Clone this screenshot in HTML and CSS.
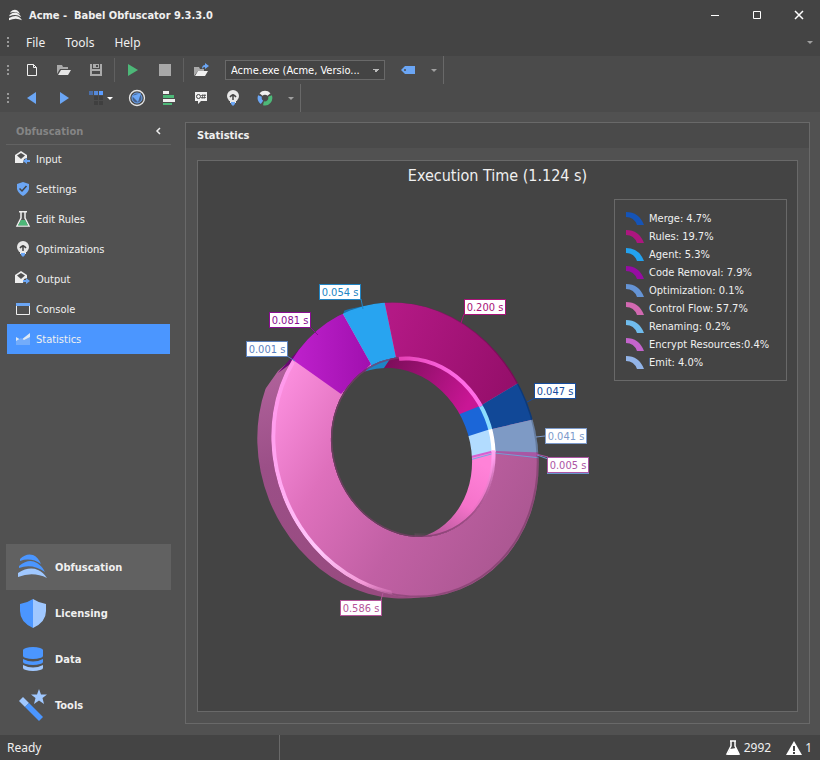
FILE: index.html
```html
<!DOCTYPE html>
<html lang="en">
<head>
    <meta charset="UTF-8">
    <meta name="viewport" content="width=device-width, initial-scale=1.0">
    <title>Acme - Babel Obfuscator 9.3.3.0</title>

    <link rel="stylesheet" href="styles.css">
</head>
<body>
<div class="window">
    <header class="titlebar">
        <svg class="logo" width="13" height="12" viewBox="0 0 30 26" fill="#f0f0f0">
            <path d="M3 6Q12-3 20 3Q24 6 25 11Q15 3 3 8Z"/>
            <path d="M1 13Q14 3 23 11Q27 14 28 18Q16 9 1 16Z"/>
            <path d="M0 20Q14 12 22 17Q27 20 30 25Q16 18 0 25Z"/>
        </svg>
        <h1>Acme -&nbsp; Babel Obfuscator 9.3.3.0</h1>
        <div class="window-controls">
            <button type="button" aria-label="Minimize"><svg width="10" height="10"><path d="M1 5.500H9" stroke="#fff"/></svg></button>
            <button type="button" aria-label="Maximize"><svg width="10" height="10"><path d="M1.500 1.500H8.500V8.500H1.500Z" stroke="#fff" fill="none"/></svg></button>
            <button type="button" aria-label="Close"><svg width="10" height="10"><path d="M1 1L9 9M9 1L1 9" stroke="#fff" stroke-width="1.500"/></svg></button>
        </div>
    </header>

    <nav class="menubar">
        <span class="grip"></span>
        <button type="button">File</button>
        <button type="button">Tools</button>
        <button type="button">Help</button>
        <span class="chevron menubar-end"></span>
    </nav>

    <div class="toolbar">
        <span class="grip"></span>
        <button type="button" aria-label="New"><svg width="16" height="16"><path d="M3.500 2.500H9.500L12.500 5.500V13.500H3.500ZM9.500 2.500V5.500H12.500" fill="none" stroke="#f0f0f0"/></svg></button>
        <button type="button" aria-label="Open"><svg width="16" height="16"><path d="M1 12V3H6L7 5H12V7H4Z" fill="#aaa"/><path d="M5 8H15L12 13H2Z" fill="#e6e6e6"/></svg></button>
        <button type="button" aria-label="Save"><svg width="16" height="16"><path d="M2 2H4V7H12V2H14V14H2ZM4 9V12H12V9Z" fill="#aaa" fill-rule="evenodd"/><path d="M5 2H11V6H5ZM8 3V5H10V3Z" fill="#aaa" fill-rule="evenodd"/></svg></button>
        <span class="separator"></span>
        <button type="button" aria-label="Run"><svg width="16" height="16"><path d="M3 2L13 8L3 14Z" fill="#4db878"/></svg></button>
        <button type="button" aria-label="Stop"><svg width="16" height="16"><path d="M2 2H14V14H2Z" fill="#a8a8a8"/></svg></button>
        <span class="separator"></span>
        <button type="button" aria-label="Open output"><svg width="16" height="16"><path d="M0 14V5H5L6 7H10V9H4Z" fill="#aaa"/><path d="M4 9H14L11 14H1Z" fill="#f0f0f0"/><path d="M8 7Q8 3 11 3V1L15 4L11 7V5Q9 5 8 7Z" fill="#6ba6f5"/></svg></button>
        <select class="assembly" aria-label="Assembly">
            <option>Acme.exe (Acme, Versio...</option>
        </select>
        <button type="button" aria-label="Tag"><svg width="16" height="16"><path d="M1 8L5 4H15V12H5Z" fill="#6ba6f5"/><circle cx="5" cy="8" r="1" fill="#4b4b4b"/></svg></button>
        <button type="button" class="toolbar-end" aria-label="Toolbar options"><span class="chevron"></span></button>
    </div>

    <div class="toolbar">
        <span class="grip"></span>
        <button type="button" aria-label="Back"><svg width="16" height="16"><path d="M12 2L3 8L12 14Z" fill="#6ba6f5"/></svg></button>
        <button type="button" aria-label="Forward"><svg width="16" height="16"><path d="M4 2L13 8L4 14Z" fill="#6ba6f5"/></svg></button>
        <button type="button" class="split" aria-label="Palette">
            <svg width="16" height="16"><path d="M0 1H4V5H0Z" fill="#4a6ea8"/><path d="M5 1H9V5H5Z" fill="#5589da"/><path d="M10 1H14V5H10Z" fill="#5c9dff"/><path d="M5 6H9V10H5ZM10 6H14V10H10ZM5 11H9V15H5ZM10 11H14V15H10Z" fill="#3f3f3f"/></svg>
            <span class="chevron light"></span>
        </button>
        <button type="button" aria-label="Radar"><svg width="18" height="18"><circle cx="9" cy="9" r="7.500" fill="none" stroke="#e6e6e6" stroke-width="1.300"/><circle cx="9" cy="9" r="5" fill="#45608a" stroke="#6ba6f5"/><path d="M4 7L13 4L10 13Z" fill="#6ba6f5"/></svg></button>
        <button type="button" aria-label="Timeline"><svg width="16" height="16"><path d="M2 1H8V4H2ZM2 9H14V12H2Z" fill="#f0f0f0"/><path d="M2 5H13V8H2ZM2 13H11V15H2Z" fill="#4db878"/></svg></button>
        <button type="button" aria-label="Comments"><svg width="16" height="16"><path d="M2 2H14V11H8L5 14V11H2Z" fill="#f0f0f0"/><circle cx="5.500" cy="6.500" r="2" fill="none" stroke="#444"/><path d="M10 4L9 9M12 4L11 9M8 5.500H13M8 7.500H13" stroke="#444" stroke-width=".7"/></svg></button>
        <button type="button" aria-label="Optimize"><svg width="16" height="16"><circle cx="8" cy="6" r="6" fill="#e8e8e8"/><path d="M5 10H11V13H5Z" fill="#e8e8e8"/><path d="M6 12H10V14L8 16L6 14Z" fill="#6ba6f5"/><path d="M8 10V4M5 7Q8 3 11 7" fill="none" stroke="#444" stroke-width="1.500"/></svg></button>
        <button type="button" aria-label="Chart"><svg width="16" height="16" fill="none" stroke-width="4"><path d="M4 4.500A5.500 5.500 0 0 1 12 4.500" stroke="#f0f0f0"/><path d="M13 6A5.500 5.500 0 0 1 6.500 13.200" stroke="#4db878"/><path d="M5 12.300A5.500 5.500 0 0 1 3 6" stroke="#6ba6f5"/></svg></button>
        <button type="button" class="toolbar-end" aria-label="Toolbar options"><span class="chevron"></span></button>
    </div>

    <div class="workspace">
        <aside class="sidebar">
            <div class="sidebar-header">
                <h2>Obfuscation</h2>
                <button type="button" aria-label="Collapse"><svg width="6" height="8"><path d="M5 1L2 4L5 7" fill="none" stroke="#eee" stroke-width="1.500"/></svg></button>
            </div>
            <nav class="nav-list">
                <a href="#input"><svg width="18" height="18"><path d="M1 5L7 1L13 5V8L10 9L9 13H1Z" fill="#eee"/><path d="M3 5.500L7 3L11 5.500L7 9Z" fill="#505050"/><path d="M16 10H13V8L9 11L13 14V12H16Z" fill="#6ba6f5"/></svg>Input</a>
                <a href="#settings"><svg width="18" height="18"><path d="M9 2L15 4V9Q14 13 9 16Q4 13 3 9V4Z" fill="#6ba6f5"/><path d="M5.500 8.500L8 11L12.500 6" fill="none" stroke="#444" stroke-width="1.500"/></svg>Settings</a>
                <a href="#rules"><svg width="18" height="18"><path d="M7 2V8L3 16H15L11 8V2M5 1.800H13" fill="none" stroke="#eee" stroke-width="1.500"/><path d="M7 10H11L14 15.500H4Z" fill="#4db878"/></svg>Edit Rules</a>
                <a href="#optimizations"><svg width="18" height="18"><circle cx="9" cy="7" r="6" fill="#e8e8e8"/><path d="M6 11H12V14H6Z" fill="#e8e8e8"/><path d="M7 13H11V15L9 17L7 15Z" fill="#6ba6f5"/><path d="M9 11V5M6 8Q9 4 12 8" fill="none" stroke="#444" stroke-width="1.500"/></svg>Optimizations</a>
                <a href="#output"><svg width="18" height="18"><path d="M1 5L7 1L13 5V8L10 9L9 13H1Z" fill="#eee"/><path d="M3 5.500L7 3L11 5.500L7 9Z" fill="#505050"/><path d="M9 10H12V8L16 11L12 14V12H9Z" fill="#6ba6f5"/></svg>Output</a>
                <a href="#console"><svg width="18" height="18"><path d="M2.500 4.500H15.500V14.500H2.500Z" fill="none" stroke="#eee"/><path d="M2 3H16V6H2Z" fill="#6ba6f5"/></svg>Console</a>
                <a href="#statistics" class="selected"><svg width="18" height="18"><path d="M2 7L7 10L16 3V8L8 12H2Z" fill="#dce8f5"/><path d="M2 11L7 8L10 10L16 7V15H2Z" fill="#73acfa"/></svg>Statistics</a>
            </nav>
            <nav class="groups">
                <a href="#obfuscation" class="active">
                    <svg width="32" height="32" viewBox="0 0 32 32"><g fill="#4b96ff"><path d="M4 8Q10 2 17 4Q22 6 25 13Q15 6 4 10Z"/><path d="M3 15Q13 7 21 12Q26 15 29 21Q16 12 3 17Z"/></g><path d="M2 22Q13 15 22 19Q27 21 31 27Q17 20 2 26Z" fill="#a0c8ff"/></svg>
                    Obfuscation
                </a>
                <a href="#licensing">
                    <svg width="32" height="32"><path d="M17 2Q11 6 4 7V14Q4 25 17 31Z" fill="#4b96ff"/><path d="M17 2Q23 6 30 7V14Q30 25 17 31Z" fill="#a0c8ff"/></svg>
                    Licensing
                </a>
                <a href="#data">
                    <svg width="32" height="32"><path d="M7 7A10 3 0 0 1 27 7V13A10 3 0 0 1 7 13ZM7 16Q17 21 27 16V19A10 3 0 0 1 7 19Z" fill="#4b96ff"/><path d="M7 22Q17 27 27 22V25A10 3 0 0 1 7 25Z" fill="#a0c8ff"/></svg>
                    Data
                </a>
                <a href="#tools">
                    <svg width="32" height="32"><path d="M3 12L7 8L13 14L9 18Z" fill="#a0c8ff"/><path d="M9 18L13 14L27 28L23 32Z" fill="#4b96ff"/><path d="M23 0L25 5.500H31L26.500 9L28 15L23 11.500L18 15L19.500 9L15 5.500H21Z" fill="#a0c8ff"/></svg>
                    Tools
                </a>
            </nav>
        </aside>

        <main class="panel">
            <h2 class="panel-title">Statistics</h2>
            <section class="chart">
                <h3>Execution Time (1.124 s)</h3>
                <div class="chart-body">
                    <svg class="plot" viewBox="198 199 408 420" role="img" aria-label="Execution time by phase">
                        <defs>
                            <linearGradient id="pinkFace" x1="270" y1="380" x2="540" y2="540" gradientUnits="userSpaceOnUse">
                                <stop offset="0" stop-color="#ff92e2"/><stop offset=".3" stop-color="#de70bc"/><stop offset=".6" stop-color="#c160a4"/><stop offset="1" stop-color="#a8568f"/>
                            </linearGradient>
                            <linearGradient id="rulesFace" x1="385" y1="330" x2="510" y2="380" gradientUnits="userSpaceOnUse">
                                <stop offset="0" stop-color="#b31985"/><stop offset="1" stop-color="#960f6b"/>
                            </linearGradient>
                            <linearGradient id="removalFace" x1="295" y1="350" x2="370" y2="350" gradientUnits="userSpaceOnUse">
                                <stop offset="0" stop-color="#bd20cb"/><stop offset="1" stop-color="#a110af"/>
                            </linearGradient>
                            <linearGradient id="pinkSide" x1="270" y1="370" x2="340" y2="590" gradientUnits="userSpaceOnUse">
                                <stop offset="0" stop-color="#b0629b"/><stop offset=".4" stop-color="#9b4f87"/><stop offset="1" stop-color="#984b80"/>
                            </linearGradient>
                            <linearGradient id="rulesWall" x1="385" y1="365" x2="465" y2="410" gradientUnits="userSpaceOnUse">
                                <stop offset="0" stop-color="#7b0d59"/><stop offset="1" stop-color="#c91695"/>
                            </linearGradient>
                            <linearGradient id="pinkWall" x1="475" y1="460" x2="430" y2="535" gradientUnits="userSpaceOnUse">
                                <stop offset="0" stop-color="#ff82d8"/><stop offset=".5" stop-color="#f573ca"/><stop offset="1" stop-color="#b55799"/>
                            </linearGradient>
                            <linearGradient id="outerGlow" x1="0" y1="360" x2="0" y2="594" gradientUnits="userSpaceOnUse">
                                <stop offset="0" stop-color="#ff9aec"/><stop offset=".3" stop-color="#ffa9f2"/><stop offset=".65" stop-color="#ffc8fb"/><stop offset=".85" stop-color="#f398d7"/><stop offset="1" stop-color="#c160a4" stop-opacity="0"/>
                            </linearGradient>
                            <linearGradient id="innerGlow" x1="400" y1="0" x2="482" y2="0" gradientUnits="userSpaceOnUse">
                                <stop offset="0" stop-color="#b31985" stop-opacity="0"/><stop offset=".4" stop-color="#e440b4"/><stop offset="1" stop-color="#ff6be6"/>
                            </linearGradient>
                            <linearGradient id="lowerGlow" x1="0" y1="455" x2="0" y2="536" gradientUnits="userSpaceOnUse">
                                <stop offset="0" stop-color="#ffd2ff"/><stop offset=".4" stop-color="#ff9eee"/><stop offset="1" stop-color="#c160a4" stop-opacity="0"/>
                            </linearGradient>
                            <mask id="ring" maskUnits="userSpaceOnUse" x="198" y="199" width="408" height="420">
                                <ellipse cx="405" cy="450" rx="131" ry="150" transform="rotate(-21.500 405 450)" fill="#fff"/>
                                <ellipse cx="413" cy="447" rx="80.500" ry="91.500" transform="rotate(-21.500 413 447)" fill="#000"/>
                            </mask>
                            <clipPath id="back"><ellipse cx="390" cy="452" rx="130" ry="149" transform="rotate(-21.500 390 452)"/></clipPath>
                            <clipPath id="inner"><ellipse cx="413" cy="447" rx="80.500" ry="91.500" transform="rotate(-21.500 413 447)"/></clipPath>
                            <clipPath id="leftEdge"><path d="M240 327L293 361L350 450L400 620H240Z"/></clipPath>
                            <clipPath id="rulesEdge"><path d="M396 340L413 447L520 383V300H396Z"/></clipPath>
                            <clipPath id="mergeEdge"><path d="M413 447L520 383L540 418Z"/></clipPath>
                            <clipPath id="emitEdge"><path d="M413 447L540 418V453L413 450Z"/></clipPath>
                            <clipPath id="lowerEdge"><path d="M413 447L560 453V560H415Z"/></clipPath>
                        </defs>

                        <!-- outer side -->
                        <g clip-path="url(#back)">
                            <path d="M240 410L266 388L278 371L285 365L293 361L420 400V620H240Z" fill="url(#pinkSide)"/>
                            <path d="M278 373L292 357L307 341L328 323L345 313V345L293 362Z" fill="#6c0875"/>
                            <path d="M343 315L350 290H388V330Z" fill="#1872ad"/>
                            <path d="M385 290H560V420H385Z" fill="#6d0a4f"/>
                        </g>

                        <!-- front face -->
                        <g mask="url(#ring)">
                            <path d="M240 280H580V620H240Z" fill="url(#pinkFace)"/>
                            <path d="M250 329.500L341 394L371 364L324 280H250Z" fill="url(#removalFace)"/>
                            <path d="M324 280L371 364L374 380L400 377L380 280Z" fill="#28a4f0"/>
                            <path d="M380 280L400 377L460 418L570 352V280Z" fill="url(#rulesFace)"/>
                            <path d="M460 418L570 352L580 409L470 434Z" fill="#114897"/>
                            <path d="M470 434L580 409V456L470 450Z" fill="#7e9ac5"/>
                            <path d="M470 451L494 451L560 453V461Z" fill="#a957a4"/>
                            <path d="M470 457L494 453L560 460" fill="none" stroke="#779dd0"/>
                            <ellipse cx="404" cy="449" rx="131" ry="150" transform="rotate(-21.500 404 449)" fill="none" stroke="#000" stroke-opacity=".2" stroke-width="2"/>
                            <g clip-path="url(#leftEdge)">
                                <ellipse cx="405" cy="450" rx="129" ry="148" transform="rotate(-21.500 405 450)" fill="none" stroke="url(#outerGlow)" stroke-width="4"/>
                            </g>
                        </g>

                        <!-- inner wall and hole -->
                        <g clip-path="url(#inner)">
                            <path d="M320 340H500V540H320Z" fill="#9a4d84"/>
                            <path d="M325 383L341 394L349 392L371 364L360 340Z" fill="#76087f"/>
                            <path d="M360 345H396L397 357L382 371L345 400L371 364Z" fill="#1e85c5"/>
                            <path d="M396 350L382 371L450 425L481 405V340H396Z" fill="url(#rulesWall)"/>
                            <path d="M450 418L500 398V427L455 441Z" fill="#1b66d8"/>
                            <path d="M455 440.500L500 426V452L455 463Z" fill="#b2dcff"/>
                            <path d="M494 452L455 462L400 545H500Z" fill="url(#pinkWall)"/>
                            <path d="M455 461L495 451" stroke="#d75fd2" stroke-width="2"/>
                            <path d="M455 464L495 453" stroke="#73a7e5"/>
                            <ellipse cx="394" cy="454" rx="76.500" ry="87.500" transform="rotate(-21.500 394 454)" fill="#444"/>
                            <ellipse cx="413" cy="447" rx="80.500" ry="91.500" transform="rotate(-21.500 413 447)" fill="none" stroke="#7a3c69" stroke-opacity=".7" stroke-width="3"/>
                        </g>
                        <g fill="none" stroke-width="4">
                            <g clip-path="url(#rulesEdge)"><ellipse cx="413" cy="447" rx="79" ry="90" transform="rotate(-21.500 413 447)" stroke="url(#innerGlow)"/></g>
                            <g clip-path="url(#mergeEdge)"><ellipse cx="413" cy="447" rx="79" ry="90" transform="rotate(-21.500 413 447)" stroke="#8bddff"/></g>
                            <g clip-path="url(#emitEdge)"><ellipse cx="413" cy="447" rx="79" ry="90" transform="rotate(-21.500 413 447)" stroke="#fff"/></g>
                            <g clip-path="url(#lowerEdge)"><ellipse cx="413" cy="447" rx="79" ry="90" transform="rotate(-21.500 413 447)" stroke="url(#lowerGlow)"/></g>
                        </g>

                        <!-- callouts -->
                        <g class="callouts">
                            <g stroke="#2285c3"><path d="M361 299L363 309"/><rect x="319.500" y="284.500" width="41" height="15"/></g>
                            <g stroke="#8a0d92"><path d="M310 327L318 335"/><rect x="269.500" y="312.500" width="41" height="15"/></g>
                            <g stroke="#5c82bf"><path d="M287 356L295 361"/><rect x="246.500" y="341.500" width="41" height="15"/></g>
                            <g stroke="#a81278"><path d="M464 314L461 323"/><rect x="464.500" y="299.500" width="41" height="15"/></g>
                            <g stroke="#164c9d"><path d="M535 398L527 402"/><rect x="534.500" y="383.500" width="41" height="15"/></g>
                            <g stroke="#7c9acb"><path d="M545 436L536 437"/><rect x="545.500" y="428.500" width="41" height="15"/></g>
                            <g stroke="#6898d0"><path d="M537 455L548 459"/><rect x="547.500" y="459.500" width="41" height="14"/></g>
                            <g stroke="#ad55a4"><path d="M536 454L548 457"/><rect x="547.500" y="457.500" width="41" height="15"/></g>
                            <g stroke="#b5569a"><path d="M381 600L383 593"/><rect x="340.500" y="600.500" width="41" height="15"/></g>
                            <text x="340" y="296" fill="#2285c3">0.054 s</text>
                            <text x="290" y="324" fill="#8a0d92">0.081 s</text>
                            <text x="267" y="353" fill="#5c82bf">0.001 s</text>
                            <text x="485" y="311" fill="#a81278">0.200 s</text>
                            <text x="555" y="395" fill="#164c9d">0.047 s</text>
                            <text x="566" y="440" fill="#7c9acb">0.041 s</text>
                            <text x="568" y="469" fill="#ad55a4">0.005 s</text>
                            <text x="361" y="612" fill="#b5569a">0.586 s</text>
                        </g>
                    </svg>
                    <ul class="legend">
                        <li><svg class="swatch merge"><path d="M0 0Q13 0 18 13H11Q8 5 0 5Z"/></svg>Merge: 4.7%</li>
                        <li><svg class="swatch rules"><path d="M0 0Q13 0 18 13H11Q8 5 0 5Z"/></svg>Rules: 19.7%</li>
                        <li><svg class="swatch agent"><path d="M0 0Q13 0 18 13H11Q8 5 0 5Z"/></svg>Agent: 5.3%</li>
                        <li><svg class="swatch removal"><path d="M0 0Q13 0 18 13H11Q8 5 0 5Z"/></svg>Code Removal: 7.9%</li>
                        <li><svg class="swatch optimization"><path d="M0 0Q13 0 18 13H11Q8 5 0 5Z"/></svg>Optimization: 0.1%</li>
                        <li><svg class="swatch flow"><path d="M0 0Q13 0 18 13H11Q8 5 0 5Z"/></svg>Control Flow: 57.7%</li>
                        <li><svg class="swatch renaming"><path d="M0 0Q13 0 18 13H11Q8 5 0 5Z"/></svg>Renaming: 0.2%</li>
                        <li><svg class="swatch encrypt"><path d="M0 0Q13 0 18 13H11Q8 5 0 5Z"/></svg>Encrypt Resources:0.4%</li>
                        <li><svg class="swatch emit"><path d="M0 0Q13 0 18 13H11Q8 5 0 5Z"/></svg>Emit: 4.0%</li>
                    </ul>
                </div>
            </section>
        </main>
    </div>

    <footer class="statusbar">
        <span class="status-text">Ready</span>
        <span class="status-item"><svg width="16" height="16"><path d="M5 1H11M6 1V6L2 14H14L10 6V1" fill="none" stroke="#fff" stroke-width="1.500"/><path d="M5 9L11 8L14 15H2Z" fill="#fff"/></svg>2992</span>
        <span class="status-item"><svg width="16" height="16"><path d="M8 1L16 15H0Z" fill="#fff"/><path d="M8 6V11M8 12V14" stroke="#444" stroke-width="2"/></svg>1</span>
    </footer>
</div>
</body>
</html>
```
FILE: styles.css
```css
* {
    box-sizing: border-box;
}

body {
    margin: 0;
    font-family: "DejaVu Sans Condensed", Tahoma, sans-serif;
    font-size: 11px;
    color: #f0f0f0;
}

h1, h2, h3, ul {
    margin: 0;
    padding: 0;
}

button {
    display: flex;
    align-items: center;
    justify-content: center;
    padding: 0;
    border: none;
    background: none;
    color: inherit;
    font: inherit;
}

a {
    color: inherit;
    text-decoration: none;
}

svg {
    display: block;
    flex: none;
}

.window {
    --dark: #444;
    --line: #696969;
    --blue: #4b96ff;
    display: flex;
    flex-direction: column;
    min-height: 100vh;
    background: #515151;
}

/* title and menu */
.titlebar {
    display: flex;
    align-items: center;
    height: 30px;
    padding-left: 9px;
    background: var(--dark);
}

.titlebar h1 {
    flex: 1;
    margin-left: 7px;
    font-size: 11px;
    font-weight: 700;
}

.window-controls {
    display: flex;
}

.window-controls button {
    width: 42px;
    height: 30px;
}

.menubar {
    display: flex;
    align-items: center;
    height: 26px;
    padding-bottom: 2px;
    background: var(--dark);
    font-family: "Noto Sans", sans-serif;
    font-size: 12px;
}

.menubar button {
    padding: 0 10px;
}

.menubar-end {
    margin: 0 7px 0 auto;
}

.grip {
    width: 16px;
    height: 12px;
    background: radial-gradient(circle, #999 1px, transparent 1px) 6px 0 / 4px 4px repeat-y;
}

.chevron {
    border: 3px solid transparent;
    border-top-color: #a0a0a0;
    border-bottom: none;
}

.chevron.light {
    border-top-color: #fff;
}

/* toolbars */
.toolbar {
    display: flex;
    align-items: center;
    height: 28px;
    background: #4b4b4b;
}

.toolbar button {
    width: 32px;
    height: 28px;
}

.toolbar .split {
    width: 41px;
    gap: 2px;
}

.toolbar .toolbar-end {
    width: 20px;
    border-right: 1px solid var(--line);
}

.separator {
    width: 1px;
    height: 24px;
    margin: 0 2px;
    background: #606060;
}

.assembly {
    appearance: none;
    width: 160px;
    height: 20px;
    margin: 0 7px;
    padding: 0 20px 0 5px;
    border: 1px solid var(--line);
    border-radius: 0;
    background: conic-gradient(from -45deg at 50% 100%, #bbb 90deg, transparent 0) 147px 8px / 6px 3px no-repeat, var(--dark);
    background: conic-gradient(from -45deg at 50% 100%, transparent 0) no-repeat, var(--dark);
    background: linear-gradient(to top right, transparent 50%, #bbb 50%) 147px 8px / 3px 3px no-repeat,
        linear-gradient(to top left, transparent 50%, #bbb 50%) 150px 8px / 3px 3px no-repeat,
        var(--dark);
    color: #fff;
    font: inherit;
}

.workspace {
    display: flex;
    flex: 1;
}

/* sidebar */
.sidebar {
    display: flex;
    flex-direction: column;
    width: 185px;
    padding: 6px 14px 7px 6px;
}

.sidebar-header {
    display: flex;
    align-items: center;
    justify-content: space-between;
    height: 27px;
    margin-bottom: -1px;
    padding: 0 10px;
    border-bottom: 1px solid #626262;
    color: #858585;
}

.sidebar-header h2 {
    font-size: 11px;
    font-weight: 700;
}

.nav-list a {
    display: flex;
    align-items: center;
    gap: 4px;
    height: 30px;
    margin: 0 1px;
    padding-left: 7px;
}

.nav-list .selected {
    background: var(--blue);
}

.groups {
    margin-top: auto;
}

.groups a {
    display: flex;
    align-items: center;
    gap: 7px;
    height: 46px;
    padding-left: 10px;
    font-weight: 700;
}

.groups .active {
    background: #616161;
}

/* statistics panel */
.panel {
    display: flex;
    flex: 1;
    flex-direction: column;
    margin: 10px 10px 11px 0;
    border: 1px solid var(--line);
}

.panel-title {
    height: 25px;
    padding-left: 11px;
    background: #4a4a4a;
    font-size: 11px;
    line-height: 25px;
}

.chart {
    flex: 1;
    margin: 12px 11px 11px;
    border: 1px solid var(--line);
    background: var(--dark);
}

.chart h3 {
    height: 38px;
    font-size: 16px;
    font-weight: 400;
    line-height: 30px;
    text-align: center;
}

.chart-body {
    display: flex;
    align-items: flex-start;
    justify-content: space-between;
    padding-right: 10px;
}

.plot {
    width: 408px;
}

.callouts rect {
    fill: #fff;
}

.callouts path {
    fill: none;
}

.callouts text {
    text-anchor: middle;
    font-size: 11px;
}

.legend {
    width: 173px;
    padding: 9px 11px;
    border: 1px solid var(--line);
    list-style: none;
}

.legend li {
    display: flex;
    align-items: center;
    gap: 5px;
    height: 18px;
    white-space: nowrap;
}

.swatch {
    width: 18px;
    height: 13px;
}

.merge { fill: #1554b7; }
.rules { fill: #ad167f; }
.agent { fill: #23a2ef; }
.removal { fill: #970ca2; }
.optimization { fill: #6594d5; }
.flow { fill: #d269b1; }
.renaming { fill: #70bced; }
.encrypt { fill: #c464cc; }
.emit { fill: #92b4e8; }

/* status bar */
.statusbar {
    display: flex;
    align-items: center;
    height: 25px;
    padding-right: 8px;
    background: var(--dark);
    font-family: "Noto Sans", sans-serif;
    font-size: 12px;
}

.status-text {
    width: 280px;
    margin-right: auto;
    padding-left: 7px;
    border-right: 1px solid var(--line);
    line-height: 25px;
}

.status-item {
    display: flex;
    align-items: center;
    gap: 3px;
    margin-left: 15px;
}
```
